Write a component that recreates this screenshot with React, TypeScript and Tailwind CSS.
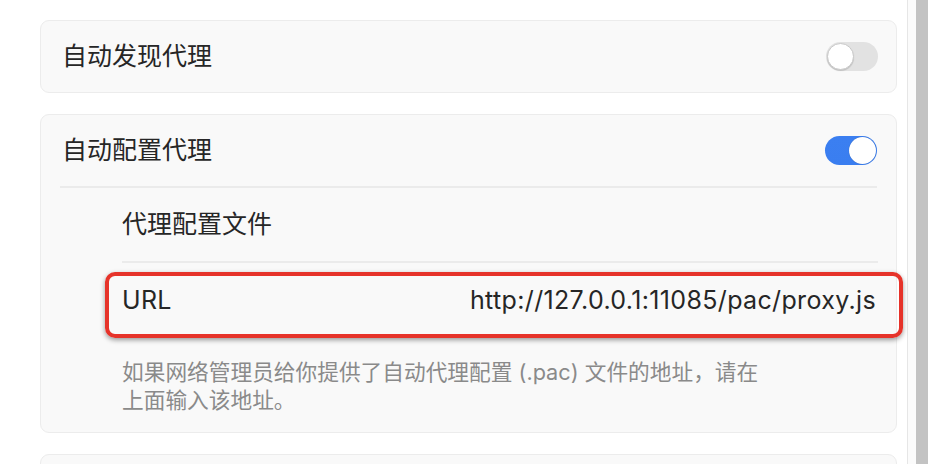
const font = "font-['Inter','Noto_Sans_CJK_SC',sans-serif]";

function Toggle({ on }: { on: boolean }) {
  return (
    <div
      className={`flex h-[29px] w-[52px] items-center rounded-full p-[1px] ${
        on ? "justify-end bg-gradient-to-b from-[#3b7ff1] to-[#3a7ef0]" : "justify-start bg-[#e2e2e2]"
      }`}
    >
      <div
        className={`h-[27px] w-[27px] rounded-full bg-white ${
          on ? "shadow-[0_0_1px_rgba(0,0,0,0.3)]" : "border border-[#c9c9c9] shadow-[0_1px_1px_rgba(0,0,0,0.15)]"
        }`}
      />
    </div>
  );
}

export default function App() {
  return (
    <div className={`flex h-[464px] w-[928px] overflow-hidden bg-white text-[#262626] ${font}`}>
      <div className="flex-1 pl-10 pr-[10px] pt-5">
        <div className="flex h-[73px] items-center justify-between rounded-[9px] border border-[#ececec] bg-[#f9f9f9] pl-[21px] pr-[18px]">
          <span className="text-[25px] leading-none">自动发现代理</span>
          <Toggle on={false} />
        </div>

        <div className="mt-[21px] rounded-[9px] border border-[#ececec] bg-[#f9f9f9]">
          <div className="mx-[19px] flex h-[73px] items-center justify-between border-b-2 border-[#ebebeb] pl-[2px]">
            <span className="text-[25px] leading-none">自动配置代理</span>
            <Toggle on={true} />
          </div>
          <div className="ml-[81px] mr-[18px]">
            <div className="flex h-[75px] items-center border-b-2 border-[#ebebeb]">
              <span className="text-[25px] leading-none">代理配置文件</span>
            </div>
            <div className="relative flex h-[75px] items-center justify-between">
              <span className="text-[25px] leading-none tracking-[0.3px]">URL</span>
              <span className="pr-[2px] text-[25px] leading-none tracking-[0.35px]">http://127.0.0.1:11085/pac/proxy.js</span>
              <div className="pointer-events-none absolute -left-[17px] -right-[25px] top-[9px] bottom-0 rounded-[10px] border-[4px] border-[#e6332a] shadow-[0_2px_5px_rgba(0,0,0,0.4)]" />
            </div>
            <p className="mt-[20px] w-[645px] pb-[18px] text-[21.7px] leading-[28px] text-[#8a8a8a]">
              如果网络管理员给你提供了自动代理配置 (.pac) 文件的地址，请在上面输入该地址。
            </p>
          </div>
        </div>

        <div className="mt-[21px] h-[40px] rounded-[9px] border border-[#ececec] bg-[#f9f9f9]" />
      </div>
      <div className="flex w-[21px] border-l border-[#e6e6e6] bg-[#fbfbfb] pl-[8px]">
        <div className="w-full bg-[#c3c3c3]" />
      </div>
    </div>
  );
}
